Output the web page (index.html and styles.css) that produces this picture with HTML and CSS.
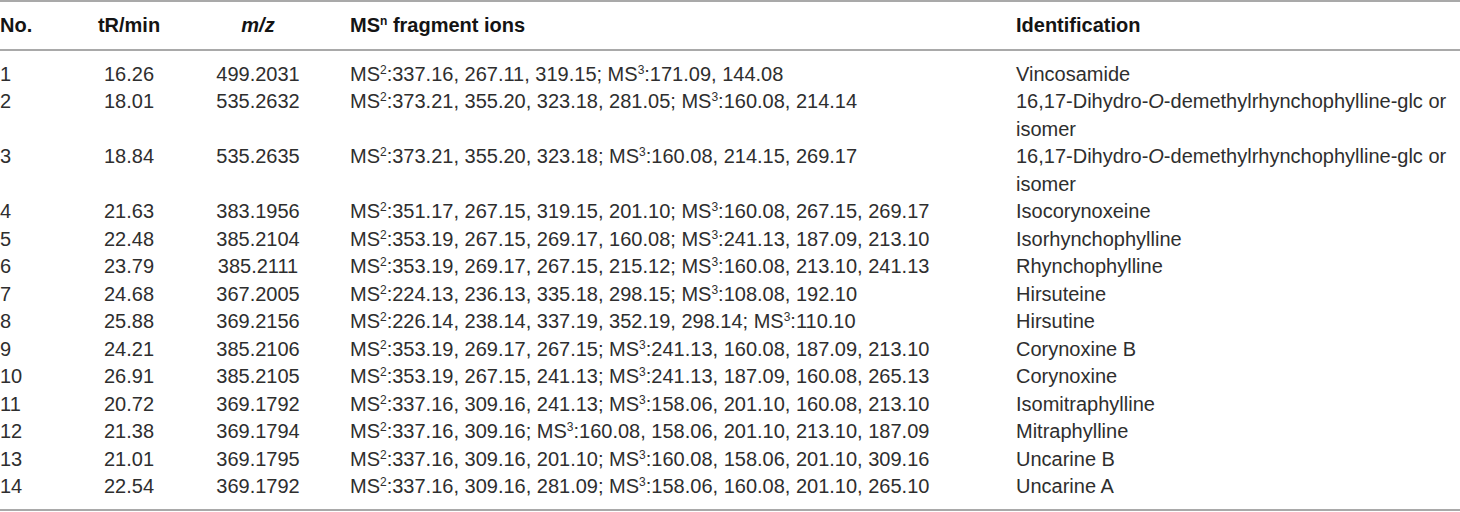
FILE: index.html
```html
<!DOCTYPE html>
<html lang="en">
<head>
<meta charset="utf-8">
<title>MS fragment ions table</title>
<link rel="stylesheet" href="styles.css">
</head>
<body>
<table class="data">
  <colgroup>
    <col class="c-no">
    <col class="c-tr">
    <col class="c-mz">
    <col class="c-ms">
    <col class="c-id">
  </colgroup>
  <thead>
    <tr>
      <th class="left">No.</th>
      <th class="center">tR/min</th>
      <th class="center mz"><i>m/z</i></th>
      <th class="left">MS<span class="sup">n</span> fragment ions</th>
      <th class="left">Identification</th>
    </tr>
  </thead>
  <tbody>
    <tr><td>1</td><td class="center">16.26</td><td class="center mz">499.2031</td><td>MS<span class="sup">2</span>:337.16, 267.11, 319.15; MS<span class="sup">3</span>:171.09, 144.08</td><td>Vincosamide</td></tr>
    <tr><td>2</td><td class="center">18.01</td><td class="center mz">535.2632</td><td>MS<span class="sup">2</span>:373.21, 355.20, 323.18, 281.05; MS<span class="sup">3</span>:160.08, 214.14</td><td><span class="line">16,17-Dihydro-<i>O</i>-demethylrhynchophylline-glc or</span><span class="line">isomer</span></td></tr>
    <tr><td>3</td><td class="center">18.84</td><td class="center mz">535.2635</td><td>MS<span class="sup">2</span>:373.21, 355.20, 323.18; MS<span class="sup">3</span>:160.08, 214.15, 269.17</td><td><span class="line">16,17-Dihydro-<i>O</i>-demethylrhynchophylline-glc or</span><span class="line">isomer</span></td></tr>
    <tr><td>4</td><td class="center">21.63</td><td class="center mz">383.1956</td><td>MS<span class="sup">2</span>:351.17, 267.15, 319.15, 201.10; MS<span class="sup">3</span>:160.08, 267.15, 269.17</td><td>Isocorynoxeine</td></tr>
    <tr><td>5</td><td class="center">22.48</td><td class="center mz">385.2104</td><td>MS<span class="sup">2</span>:353.19, 267.15, 269.17, 160.08; MS<span class="sup">3</span>:241.13, 187.09, 213.10</td><td>Isorhynchophylline</td></tr>
    <tr><td>6</td><td class="center">23.79</td><td class="center mz">385.2111</td><td>MS<span class="sup">2</span>:353.19, 269.17, 267.15, 215.12; MS<span class="sup">3</span>:160.08, 213.10, 241.13</td><td>Rhynchophylline</td></tr>
    <tr><td>7</td><td class="center">24.68</td><td class="center mz">367.2005</td><td>MS<span class="sup">2</span>:224.13, 236.13, 335.18, 298.15; MS<span class="sup">3</span>:108.08, 192.10</td><td>Hirsuteine</td></tr>
    <tr><td>8</td><td class="center">25.88</td><td class="center mz">369.2156</td><td>MS<span class="sup">2</span>:226.14, 238.14, 337.19, 352.19, 298.14; MS<span class="sup">3</span>:110.10</td><td>Hirsutine</td></tr>
    <tr><td>9</td><td class="center">24.21</td><td class="center mz">385.2106</td><td>MS<span class="sup">2</span>:353.19, 269.17, 267.15; MS<span class="sup">3</span>:241.13, 160.08, 187.09, 213.10</td><td>Corynoxine B</td></tr>
    <tr><td>10</td><td class="center">26.91</td><td class="center mz">385.2105</td><td>MS<span class="sup">2</span>:353.19, 267.15, 241.13; MS<span class="sup">3</span>:241.13, 187.09, 160.08, 265.13</td><td>Corynoxine</td></tr>
    <tr><td>11</td><td class="center">20.72</td><td class="center mz">369.1792</td><td>MS<span class="sup">2</span>:337.16, 309.16, 241.13; MS<span class="sup">3</span>:158.06, 201.10, 160.08, 213.10</td><td>Isomitraphylline</td></tr>
    <tr><td>12</td><td class="center">21.38</td><td class="center mz">369.1794</td><td>MS<span class="sup">2</span>:337.16, 309.16; MS<span class="sup">3</span>:160.08, 158.06, 201.10, 213.10, 187.09</td><td>Mitraphylline</td></tr>
    <tr><td>13</td><td class="center">21.01</td><td class="center mz">369.1795</td><td>MS<span class="sup">2</span>:337.16, 309.16, 201.10; MS<span class="sup">3</span>:160.08, 158.06, 201.10, 309.16</td><td>Uncarine B</td></tr>
    <tr><td>14</td><td class="center">22.54</td><td class="center mz">369.1792</td><td>MS<span class="sup">2</span>:337.16, 309.16, 281.09; MS<span class="sup">3</span>:158.06, 160.08, 201.10, 265.10</td><td>Uncarine A</td></tr>
  </tbody>
</table>
</body>
</html>
```
FILE: styles.css
```css
html, body {
  margin: 0;
  padding: 0;
  background: #ffffff;
}

.data {
  width: 1460px;
  table-layout: fixed;
  border-collapse: collapse;
  font-family: "Liberation Sans", Arial, sans-serif;
  font-size: 20px;
  line-height: 27.5px;
  color: #2e2e2e;
  border-top: 2px solid #a9a9a9;
  border-bottom: 2px solid #a9a9a9;
}

.c-no { width: 65px; }
.c-tr { width: 128px; }
.c-mz { width: 157px; }
.c-ms { width: 666px; }
.c-id { width: 444px; }

.data th,
.data td {
  padding: 0;
  vertical-align: top;
  text-align: left;
  white-space: normal;
}

.data th {
  font-weight: bold;
  color: #141414;
  padding-top: 10px;
  padding-bottom: 9px;
  border-bottom: 2px solid #a9a9a9;
}

.data .center { text-align: center; }
.data .left { text-align: left; }
.data .mz { padding-right: 27px; }

.data tbody tr:first-child td { padding-top: 10px; }
.data tbody tr:last-child td { padding-bottom: 8.5px; }

.line {
  display: block;
  white-space: nowrap;
}

.sup {
  font-size: 12px;
  line-height: 0;
  vertical-align: 7px;
}
```
